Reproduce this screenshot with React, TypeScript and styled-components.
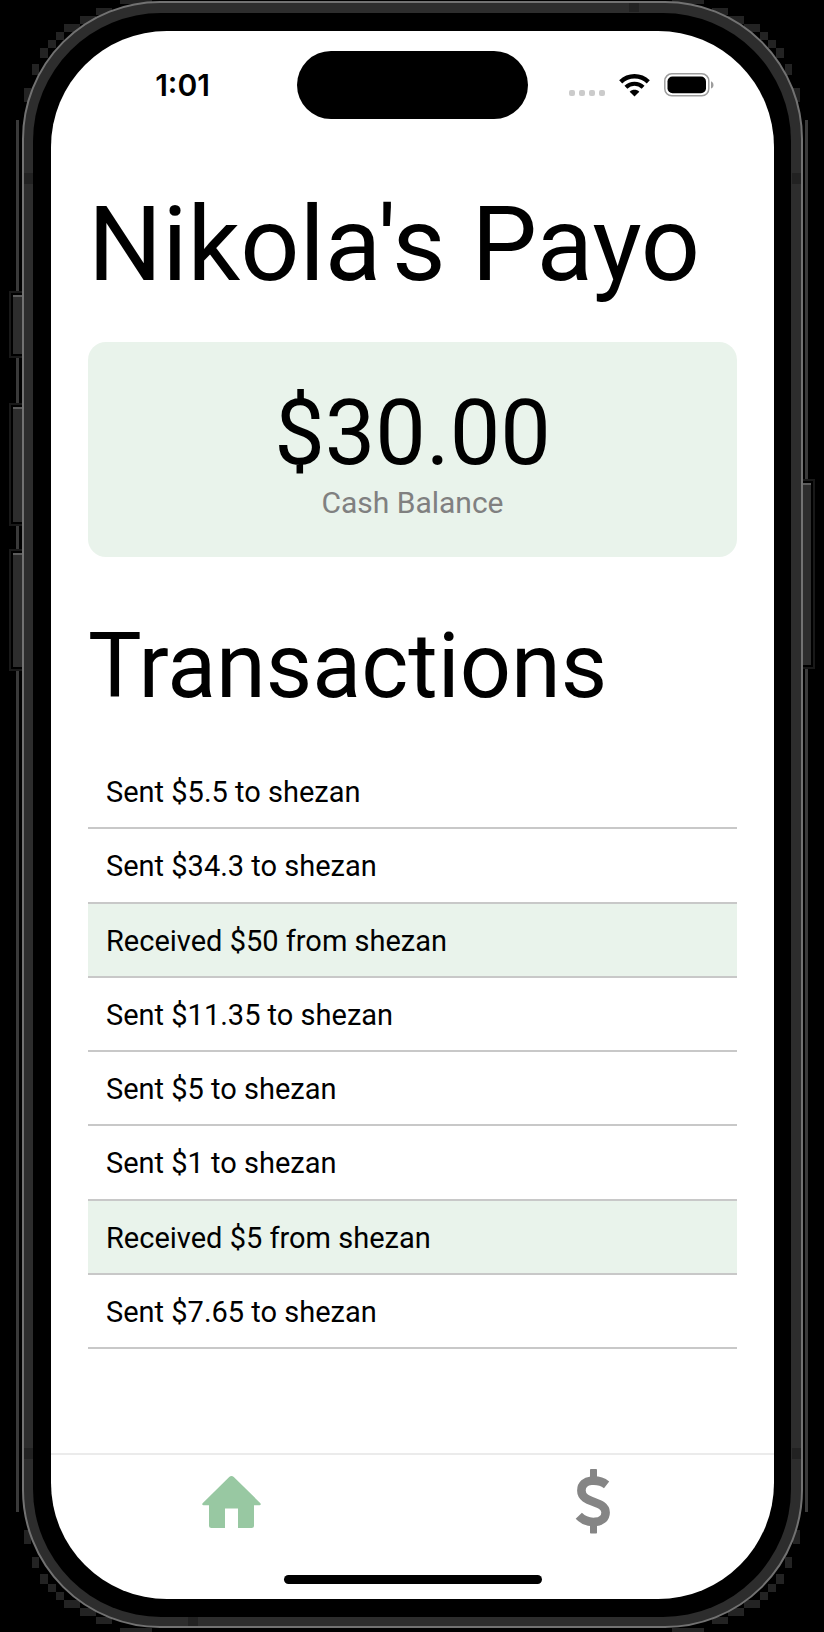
import React from 'react';
import styled, { createGlobalStyle } from 'styled-components';

const GlobalStyle = createGlobalStyle`
  *, *::before, *::after { box-sizing: border-box; }
  html, body { margin: 0; background: #000; }
  body { font-family: Roboto, "Liberation Sans", sans-serif; color: #000; }
  h1, h2, p, ul { margin: 0; padding: 0; font-weight: 400; }
`;

const Page = styled.div`
  position: relative;
  display: flex;
  min-height: 100vh;
  padding: 1px 21px 4px 22px;
  background: #000;
  overflow: hidden;
`;

const Frame = styled.div`
  position: relative;
  flex: 1;
  min-width: 0;
  display: flex;
  padding: 10px 10px 9px 9px;
  border: 2px solid #727272;
  border-radius: 138px;
  background: #2d2d2d;
`;

const Bezel = styled.div`
  position: relative;
  flex: 1;
  min-width: 0;
  display: flex;
  padding: 18px 17px 18px 18px;
  border-radius: 128px;
  background: #000;
`;

const Screen = styled.div`
  flex: 1;
  min-width: 0;
  display: flex;
  flex-direction: column;
  border-radius: 116px;
  background: #fff;
  overflow: hidden;
`;

const SideKey = styled.span<{ $side: 'left' | 'right'; $top: number; $height: number }>`
  position: absolute;
  ${(p) => p.$side}: 13px;
  top: ${(p) => p.$top}px;
  width: 9px;
  height: ${(p) => p.$height}px;
  border-top: 2px solid #5c5c5c;
  background: #2d2d2d;
  box-shadow: 0 0 0 2px #000, 0 0 0 4px #191919;
`;

const EdgeLine = styled.span<{ $side: 'left' | 'right' }>`
  position: absolute;
  ${(p) => p.$side}: 16px;
  top: 120px;
  bottom: 120px;
  width: 3px;
  background: #3a3a3a;
`;

const Antenna = styled.span<{ $edge: 'left' | 'right' | 'top' | 'bottom'; $at: string }>`
  position: absolute;
  background: #222;
  ${(p) => p.$edge}: 0;
  ${(p) =>
    p.$edge === 'left' || p.$edge === 'right'
      ? `top: ${p.$at}; width: 9px; height: 11px;`
      : `left: ${p.$at}; width: 10px; height: 9px;`}
`;

const StatusBar = styled.header`
  display: grid;
  grid-template-columns: 1fr 231px 1fr;
  align-items: center;
  padding-top: 20px;
`;

const Time = styled.time`
  padding-left: 17px;
  text-align: center;
  font: 600 30px/36px Inter, sans-serif;
`;

const Island = styled.div`
  height: 68px;
  border-radius: 34px;
  background: #000;
`;

const StatusIcons = styled.div`
  display: flex;
  justify-content: flex-end;
  align-items: center;
  gap: 14px;
  padding-right: 60px;
  svg { display: block; }
`;

const Content = styled.main`
  flex: 1;
  display: flex;
  flex-direction: column;
  padding: 56px 37px 104px;
`;

const Title = styled.h1`
  font-size: 104px;
  line-height: 140px;
  white-space: nowrap;
`;

const BalanceCard = styled.section`
  margin-top: 27px;
  padding: 44px 20px 34px;
  border-radius: 18px;
  background: #e9f3eb;
  text-align: center;
`;

const Amount = styled.p`
  font-size: 90px;
  line-height: 96px;
`;

const Caption = styled.p`
  font-size: 30px;
  line-height: 41px;
  color: #808080;
`;

const SectionTitle = styled.h2`
  margin-top: 54px;
  font-size: 90px;
  line-height: 112px;
`;

const Transactions = styled.ul`
  flex: 1;
  display: flex;
  flex-direction: column;
  margin-top: 32px;
  list-style: none;
`;

const Transaction = styled.li<{ $received: boolean }>`
  flex: 1;
  display: flex;
  align-items: center;
  min-height: 74px;
  padding: 2px 18px 0;
  border-bottom: 2px solid #c8c8c8;
  background: ${(p) => (p.$received ? '#e9f3eb' : '#fff')};
  font-size: 29px;
  line-height: 36px;
`;

const TabBar = styled.nav`
  position: relative;
  display: grid;
  grid-template-columns: 1fr 1fr;
  height: 146px;
  border-top: 2px solid #ebebeb;
`;

const Tab = styled.button`
  display: flex;
  justify-content: center;
  align-items: center;
  height: 94px;
  padding: 0;
  border: 0;
  background: none;
  svg { display: block; }
`;

const HomeIndicator = styled.span`
  position: absolute;
  left: 50%;
  bottom: 15px;
  width: 258px;
  height: 9px;
  margin-left: -129px;
  border-radius: 5px;
  background: #000;
`;

const Halo = styled.svg<{ $v: 'top' | 'bottom'; $h: 'left' | 'right' }>`
  position: absolute;
  ${(p) => p.$v}: 0;
  ${(p) => p.$h}: 0;
  transform: scale(${(p) => (p.$h === 'right' ? -1 : 1)}, ${(p) => (p.$v === 'bottom' ? -1 : 1)});
`;

const haloSteps = [
  [120, 0, 32, 4], [96, 8, 16, 7], [80, 16, 16, 8], [64, 24, 16, 8],
  [56, 32, 8, 8], [48, 40, 8, 8], [40, 48, 8, 10], [32, 64, 7, 11], [24, 88, 7, 14],
];

const corners = [
  ['top', 'left'], ['top', 'right'], ['bottom', 'left'], ['bottom', 'right'],
] as const;

const transactions = [
  { received: false, text: 'Sent $5.5 to shezan' },
  { received: false, text: 'Sent $34.3 to shezan' },
  { received: true, text: 'Received $50 from shezan' },
  { received: false, text: 'Sent $11.35 to shezan' },
  { received: false, text: 'Sent $5 to shezan' },
  { received: false, text: 'Sent $1 to shezan' },
  { received: true, text: 'Received $5 from shezan' },
  { received: false, text: 'Sent $7.65 to shezan' },
];

const SignalIcon = () => (
  <svg width="36" height="24" viewBox="0 0 36 24" fill="#cbcbcb" aria-hidden="true">
    {[0, 10, 20, 30].map((x) => (
      <rect key={x} x={x} y="17" width="6" height="6" rx="2" />
    ))}
  </svg>
);

const WifiIcon = () => (
  <svg width="31" height="23" viewBox="0 0 31 23" aria-hidden="true">
    <path d="M1.7 7.8 C9.5 0.4 21.5 0.4 29.3 7.8" fill="none" stroke="#000" strokeWidth="4.4" />
    <path d="M6.9 13.2 C11.8 8.6 19.2 8.6 24.1 13.2" fill="none" stroke="#000" strokeWidth="4.2" />
    <path d="M10.7 17.7 C13.2 15.2 17.8 15.2 20.3 17.7 L15.5 22.6 Z" />
  </svg>
);

const BatteryIcon = () => (
  <svg width="50" height="24" viewBox="0 0 50 24" aria-hidden="true">
    <rect x="0.8" y="0.8" width="44" height="22" rx="7" fill="none" stroke="#9d9d9d" strokeWidth="1.5" />
    <rect x="3.5" y="3.5" width="38.5" height="16.8" rx="5" />
    <path d="M47 8.2 C50.3 9.5 50.3 14.3 47 15.6 Z" fill="#9d9d9d" />
  </svg>
);

const HomeIcon = () => (
  <svg width="59" height="52" viewBox="0 0 59 52" fill="#98c8a2" aria-hidden="true">
    <path d="M27.2 1 Q29.5-0.9 31.8 1 L58.4 27.2 Q59.4 29 57.5 29.2 H52 V49.5 Q52 52 49.5 52 H36 V32.5 H23 V52 H9.5 Q7 52 7 49.5 V29.2 H1.5 Q-0.4 29 0.6 27.2 Z" />
  </svg>
);

const DollarIcon = () => (
  <svg width="36" height="66" viewBox="163 89 36 66" aria-hidden="true">
    <rect x="178" y="89" width="7" height="12" rx="0.8" fill="#858585" />
    <rect x="178" y="141" width="7" height="12.5" rx="0.8" fill="#858585" />
    <path
      d="M194.6 104.8 C187 99 169.4 98 169.4 110.5 C169.4 124 193.6 120 193.6 132.5 C193.6 144.5 175 144.5 166.8 135.8"
      fill="none"
      stroke="#858585"
      strokeWidth="8.6"
    />
  </svg>
);

export default function App() {
  return (
    <>
      <GlobalStyle />
      <Page>
        {corners.map(([v, h]) => (
          <Halo key={v + h} $v={v} $h={h} width="160" height="160" viewBox="0 0 160 160" aria-hidden="true">
            {haloSteps.map(([x, y, w, hgt]) => (
              <rect key={x} x={x} y={y} width={w} height={hgt} fill="#232323" />
            ))}
          </Halo>
        ))}
        <EdgeLine $side="left" />
        <EdgeLine $side="right" />
        <SideKey $side="left" $top={295} $height={59} />
        <SideKey $side="left" $top={407} $height={115} />
        <SideKey $side="left" $top={553} $height={114} />
        <SideKey $side="right" $top={483} $height={182} />
        <Frame>
          <Antenna $edge="left" $at="170px" />
          <Antenna $edge="right" $at="170px" />
          <Antenna $edge="left" $at="calc(100% - 178px)" />
          <Antenna $edge="right" $at="calc(100% - 178px)" />
          <Antenna $edge="top" $at="calc(100% - 172px)" />
          <Antenna $edge="bottom" $at="164px" />
          <Bezel>
            <Screen>
              <StatusBar>
                <Time>1:01</Time>
                <Island />
                <StatusIcons>
                  <SignalIcon />
                  <WifiIcon />
                  <BatteryIcon />
                </StatusIcons>
              </StatusBar>
              <Content>
                <Title>Nikola's Payo</Title>
                <BalanceCard>
                  <Amount>$30.00</Amount>
                  <Caption>Cash Balance</Caption>
                </BalanceCard>
                <SectionTitle>Transactions</SectionTitle>
                <Transactions>
                  {transactions.map((t) => (
                    <Transaction key={t.text} $received={t.received}>
                      {t.text}
                    </Transaction>
                  ))}
                </Transactions>
              </Content>
              <TabBar>
                <Tab type="button" aria-label="Home">
                  <HomeIcon />
                </Tab>
                <Tab type="button" aria-label="Pay">
                  <DollarIcon />
                </Tab>
                <HomeIndicator />
              </TabBar>
            </Screen>
          </Bezel>
        </Frame>
      </Page>
    </>
  );
}
